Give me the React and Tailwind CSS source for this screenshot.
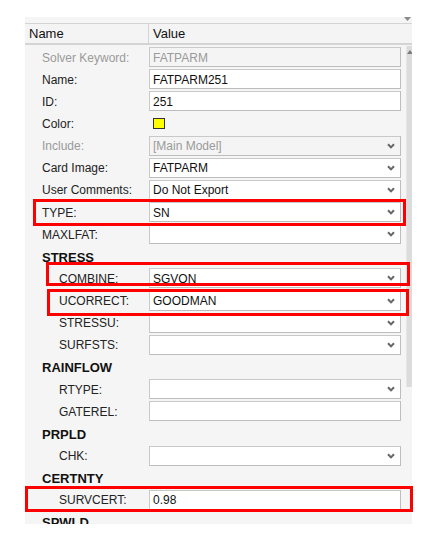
import React from "react";

const Chevron = () => (
  <svg width="8" height="6" viewBox="0 0 8 6" className="shrink-0">
    <polyline points="1,1.2 4,4.4 7,1.2" fill="none" stroke="#666" strokeWidth="2" />
  </svg>
);

const rows = [
  { label: "Solver Keyword:", value: "FATPARM", kind: "text", disabled: true },
  { label: "Name:", value: "FATPARM251", kind: "text" },
  { label: "ID:", value: "251", kind: "text" },
  { label: "Color:", kind: "color" },
  { label: "Include:", value: "[Main Model]", kind: "select", disabled: true },
  { label: "Card Image:", value: "FATPARM", kind: "select" },
  { label: "User Comments:", value: "Do Not Export", kind: "select" },
  { label: "TYPE:", value: "SN", kind: "select" },
  { label: "MAXLFAT:", value: "", kind: "select" },
  { label: "STRESS", kind: "section" },
  { label: "COMBINE:", value: "SGVON", kind: "select", indent: true },
  { label: "UCORRECT:", value: "GOODMAN", kind: "select", indent: true },
  { label: "STRESSU:", value: "", kind: "select", indent: true },
  { label: "SURFSTS:", value: "", kind: "select", indent: true },
  { label: "RAINFLOW", kind: "section" },
  { label: "RTYPE:", value: "", kind: "select", indent: true },
  { label: "GATEREL:", value: "", kind: "text", indent: true },
  { label: "PRPLD", kind: "section" },
  { label: "CHK:", value: "", kind: "select", indent: true },
  { label: "CERTNTY", kind: "section" },
  { label: "SURVCERT:", value: "0.98", kind: "text", indent: true },
  { label: "SPWLD", kind: "section" },
];

const ValueCell = ({ row }) => {
  if (row.kind === "color") {
    return (
      <div className="h-[20px] flex items-center pl-[4px]">
        <div className="w-[12px] h-[11px] bg-[#ffff00] border border-[#333]"></div>
      </div>
    );
  }
  return (
    <div
      className={`h-[20px] w-[252px] border border-[#c9c9c9] border-r-[#bdbdbd] border-b-[#bdbdbd] flex items-center pl-[3px] pr-[5px] ${
        row.disabled ? "bg-[#f4f4f4] text-[#9a9a9a]" : "bg-white text-[#111]"
      }`}
    >
      <span className="flex-1 truncate pt-[1px]">{row.value}</span>
      {row.kind === "select" && <Chevron />}
    </div>
  );
};

const Row = ({ row }) => {
  if (row.kind === "section") {
    return (
      <div className="h-[22.15px] flex items-center pl-[17px] pt-[2px] font-bold text-[13px] text-[#111]">
        {row.label}
      </div>
    );
  }
  return (
    <div className="h-[22.15px] flex items-center">
      <div
        className={`w-[124px] shrink-0 pt-[1px] ${row.indent ? "pl-[34px]" : "pl-[17px]"} ${
          row.disabled ? "text-[#9a9a9a]" : "text-[#222]"
        }`}
      >
        {row.label}
      </div>
      <ValueCell row={row} />
    </div>
  );
};

const RedBox = ({ className }) => (
  <div className={`absolute border-[3px] border-[#ff0000] pointer-events-none ${className}`}></div>
);

export default function App() {
  return (
    <div
      className="relative w-[439px] h-[541px] bg-white pt-[17px] pl-[25px] text-[12px]"
      style={{ fontFamily: '"Liberation Sans", Arial, sans-serif' }}
    >
      <div className="w-[387px] h-[507px] bg-[#f5f5f5] overflow-hidden">
        <div className="relative h-[6px]">
          <svg width="7" height="5" viewBox="0 0 7 5" className="absolute right-[1px] top-[0px]">
            <polygon points="0,0 7,0 3.5,4" fill="#8a8a8a" />
          </svg>
        </div>
        <div className="h-[22px] flex border-t border-b-2 border-[#d4d4d4] bg-[#f4f4f4] text-[13px] text-[#111]">
          <div className="w-[124px] border-r border-[#d4d4d4] pl-[4px] flex items-center">Name</div>
          <div className="pl-[4px] flex items-center">Value</div>
        </div>
        <div className="flex pt-[1px]">
          <div className="w-[381px] shrink-0">
            {rows.map((row) => (
              <Row key={row.label} row={row} />
            ))}
          </div>
          <div className="w-[6px] h-[341px] bg-[#dcdcdc] border-l border-[#e6e6e6] relative">
            <svg width="6" height="4" viewBox="0 0 6 4" className="absolute left-0 top-[4px]">
              <polygon points="0,4 6,4 3,0" fill="#7a7a7a" />
            </svg>
          </div>
        </div>
      </div>

      <RedBox className="left-[33px] top-[199px] w-[373px] h-[27px]" />
      <RedBox className="left-[46px] top-[262px] w-[364px] h-[24px]" />
      <RedBox className="left-[47px] top-[289px] w-[362px] h-[27px]" />
      <RedBox className="left-[25px] top-[486px] w-[388px] h-[26px]" />
    </div>
  );
}
